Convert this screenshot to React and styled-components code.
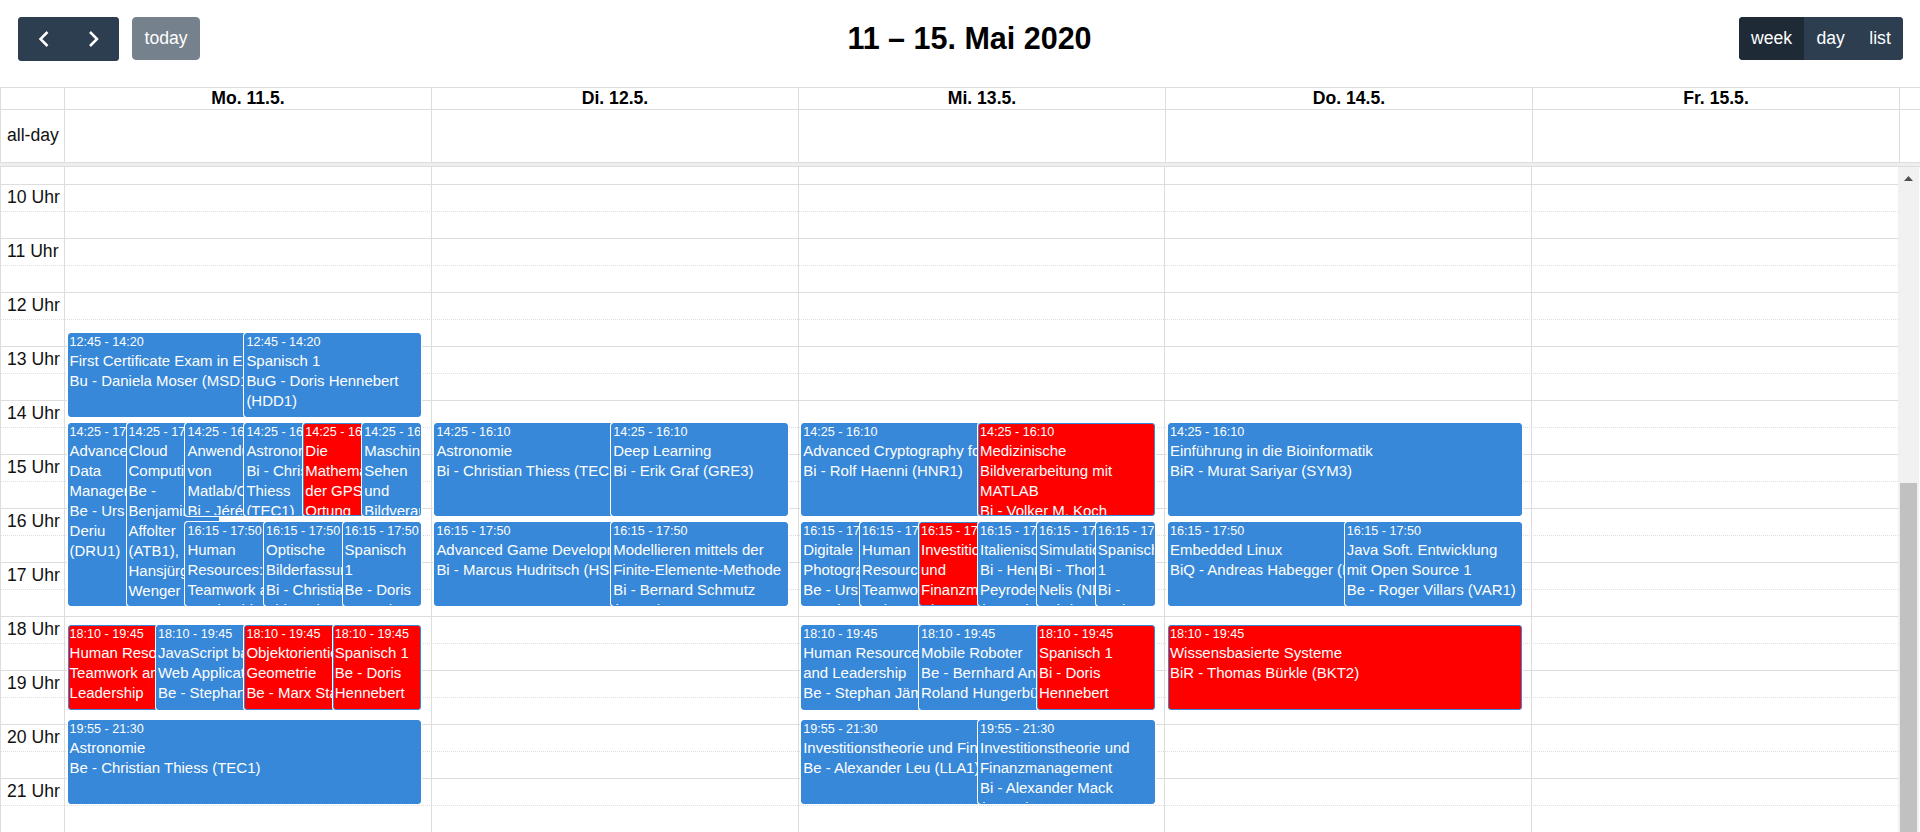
import React from 'react';
import styled, { createGlobalStyle } from 'styled-components';

const HOUR = 54;
const FIRST_LINE = 17; // 10 Uhr line, measured from the top of the scroller

const toY = (time) => {
    const [h, m] = time.split(':').map(Number);
    return FIRST_LINE + (h - 10 + m / 60) * HOUR;
};

const ev = (start, end, l, r, lines, red) => ({ start, end, l, r, lines, red });

const days = [
    [
        ev('12:45', '14:20', 0, 1, ['First Certificate Exam in English', 'Bu - Daniela Moser (MSD1)']),
        ev('12:45', '14:20', 1 / 2, 1, ['Spanisch 1', 'BuG - Doris Hennebert', '(HDD1)']),
        ev('14:25', '17:50', 0, 1 / 3, ['Advanced', 'Data', 'Management', 'Be - Urs', 'Deriu', '(DRU1)']),
        ev('14:25', '17:50', 1 / 6, 0.427, ['Cloud', 'Computing', 'Be -', 'Benjamin', 'Affolter', '(ATB1),', 'Hansjürg', 'Wenger']),
        ev('14:25', '16:10', 2 / 6, 4 / 6, ['Anwendung', 'von', 'Matlab/Octave', 'Bi - Jérémie']),
        ev('14:25', '16:10', 3 / 6, 5 / 6, ['Astronomie', 'Bi - Christian', 'Thiess', '(TEC1)']),
        ev('14:25', '16:10', 4 / 6, 0.92, ['Die', 'Mathematik', 'der GPS', 'Ortung'], true),
        ev('14:25', '16:10', 5 / 6, 1, ['Maschinelles', 'Sehen', 'und', 'Bildverarbeitung']),
        ev('16:15', '17:50', 2 / 6, 0.65, ['Human', 'Resources:', 'Teamwork and', 'Leadership']),
        ev('16:15', '17:50', 5 / 9, 0.87, ['Optische', 'Bilderfassung', 'Bi - Christian', 'Thiess (TEC1)']),
        ev('16:15', '17:50', 7 / 9, 1, ['Spanisch', '1', 'Be - Doris', 'Hennebert']),
        ev('18:10', '19:45', 0, 1 / 2, ['Human Resources:', 'Teamwork and', 'Leadership'], true),
        ev('18:10', '19:45', 1 / 4, 3 / 4, ['JavaScript based', 'Web Applications', 'Be - Stephan Fischli']),
        ev('18:10', '19:45', 1 / 2, 1, ['Objektorientierte', 'Geometrie', 'Be - Marx Stampfli'], true),
        ev('18:10', '19:45', 3 / 4, 1, ['Spanisch 1', 'Be - Doris', 'Hennebert'], true),
        ev('19:55', '21:30', 0, 1, ['Astronomie', 'Be - Christian Thiess (TEC1)']),
    ],
    [
        ev('14:25', '16:10', 0, 1, ['Astronomie', 'Bi - Christian Thiess (TEC1)']),
        ev('14:25', '16:10', 1 / 2, 1, ['Deep Learning', 'Bi - Erik Graf (GRE3)']),
        ev('16:15', '17:50', 0, 1, ['Advanced Game Development', 'Bi - Marcus Hudritsch (HSM1)']),
        ev('16:15', '17:50', 1 / 2, 1, ['Modellieren mittels der', 'Finite-Elemente-Methode', 'Bi - Bernard Schmutz', '(SNB1)']),
    ],
    [
        ev('14:25', '16:10', 0, 1, ['Advanced Cryptography for', 'Bi - Rolf Haenni (HNR1)']),
        ev('14:25', '16:10', 1 / 2, 1, ['Medizinische', 'Bildverarbeitung mit', 'MATLAB', 'Bi - Volker M. Koch'], true),
        ev('16:15', '17:50', 0, 2 / 6, ['Digitale', 'Photografie', 'Be - Urs', 'Künzler']),
        ev('16:15', '17:50', 1 / 6, 3 / 6, ['Human', 'Resources:', 'Teamwork', 'and']),
        ev('16:15', '17:50', 2 / 6, 4 / 6, ['Investitionstheorie', 'und', 'Finanzmanagement', 'Bi -'], true),
        ev('16:15', '17:50', 3 / 6, 5 / 6, ['Italienisch', 'Bi - Henri', 'Peyrodes', '(PGH1)']),
        ev('16:15', '17:50', 4 / 6, 1, ['Simulation', 'Bi - Thomas', 'Nelis (NLT1)', 'Stéphane']),
        ev('16:15', '17:50', 5 / 6, 1, ['Spanisch', '1', 'Bi -', 'Doris']),
        ev('18:10', '19:45', 0, 2 / 3, ['Human Resources', 'and Leadership', 'Be - Stephan Jämthagen']),
        ev('18:10', '19:45', 1 / 3, 1, ['Mobile Roboter', 'Be - Bernhard Anrig', 'Roland Hungerbühler']),
        ev('18:10', '19:45', 2 / 3, 1, ['Spanisch 1', 'Bi - Doris', 'Hennebert'], true),
        ev('19:55', '21:30', 0, 1, ['Investitionstheorie und Finanzmanagement', 'Be - Alexander Leu (LLA1)']),
        ev('19:55', '21:30', 1 / 2, 1, ['Investitionstheorie und', 'Finanzmanagement', 'Bi - Alexander Mack', '(MAA3)']),
    ],
    [
        ev('14:25', '16:10', 0, 1, ['Einführung in die Bioinformatik', 'BiR - Murat Sariyar (SYM3)']),
        ev('16:15', '17:50', 0, 1, ['Embedded Linux', 'BiQ - Andreas Habegger (HBA1)']),
        ev('16:15', '17:50', 1 / 2, 1, ['Java Soft. Entwicklung', 'mit Open Source 1', 'Be - Roger Villars (VAR1)']),
        ev('18:10', '19:45', 0, 1, ['Wissensbasierte Systeme', 'BiR - Thomas Bürkle (BKT2)'], true),
    ],
    [],
];

const headers = ['Mo. 11.5.', 'Di. 12.5.', 'Mi. 13.5.', 'Do. 14.5.', 'Fr. 15.5.'];
const hours = [10, 11, 12, 13, 14, 15, 16, 17, 18, 19, 20, 21];

const GlobalStyle = createGlobalStyle`
    html, body {
        margin: 0;
        height: 100%;
        overflow: hidden;
        background: #fff;
    }
    body {
        font-family: "Liberation Sans", Arial, sans-serif;
        font-size: 17.6px;
        line-height: 1.5;
        color: #111;
    }
    * {
        box-sizing: border-box;
    }
`;

const Calendar = styled.div`
    width: 1920px;
    height: 832px;
    overflow: hidden;
`;

const Toolbar = styled.div`
    height: 87px;
    padding: 17px 17px 0 18px;
    display: flex;
    justify-content: space-between;
    align-items: flex-start;
`;

const Group = styled.div`
    display: flex;
    gap: 13px;
`;

const ButtonGroup = styled.div`
    display: flex;
    border-radius: 4px;
    overflow: hidden;
`;

const Button = styled.button`
    height: ${(p) => (p.$tall ? '44px' : '43px')};
    padding: 0 11.2px;
    font: inherit;
    color: #fff;
    border: 1px solid ${(p) => (p.$active ? '#1e2b37' : '#2c3e50')};
    background: ${(p) => (p.$active ? '#1e2b37' : '#2c3e50')};
    display: flex;
    align-items: center;
    justify-content: center;
`;

const ArrowButton = styled(Button)`
    width: 50.5px;
    padding: 0;
`;

const TodayButton = styled(Button)`
    padding: 0 11.5px;
    opacity: 0.65;
    border-radius: 4px;
`;

const Title = styled.h2`
    margin: 0;
    font-size: 30.5px;
    line-height: 43px;
    font-weight: 700;
    color: #000;
`;

const HeadRow = styled.div`
    display: grid;
    grid-template-columns: 64px repeat(5, 367px) 1fr;
    height: ${(p) => p.$height}px;
    border-top: 1px solid #ddd;
`;

const HeadCell = styled.div`
    border-left: 1px solid #ddd;
    font-weight: ${(p) => (p.$bold ? 700 : 400)};
    color: ${(p) => (p.$bold ? '#000' : 'inherit')};
    text-align: ${(p) => (p.$bold ? 'center' : 'left')};
    line-height: 21px;
`;

const AxisLabel = styled(HeadCell)`
    padding: 13px 0 0 6px;
    white-space: nowrap;
    line-height: 24px;
`;

const Divider = styled.div`
    height: 5px;
    background: #eee;
    border-top: 1px solid #ddd;
    border-bottom: 1px solid #ddd;
`;

const Scroller = styled.div`
    display: flex;
    height: 665px;
    overflow: hidden;
`;

const Grid = styled.div`
    position: relative;
    width: 1898px;
    flex: none;
    border-left: 1px solid #ddd;
`;

const SlotRow = styled.div`
    height: ${(p) => p.$height || HOUR / 2}px;
    border-bottom: 1px ${(p) => (p.$dotted ? 'dotted' : 'solid')} #ddd;
    padding-left: 6px;
    line-height: 24px;
    white-space: nowrap;
`;

const Columns = styled.div`
    position: absolute;
    top: 0;
    bottom: 0;
    left: 63px;
    right: 0;
    display: grid;
    grid-template-columns: repeat(5, 1fr);
`;

const DayColumn = styled.div`
    position: relative;
    border-left: 1px solid #ddd;
    padding: 0 9.6px 0 2.6px;
`;

const EventLayer = styled.div`
    position: relative;
    height: 100%;
`;

const Event = styled.div.attrs((p) => ({
    style: {
        top: p.$top,
        height: p.$height,
        left: `${p.$l * 100}%`,
        right: `${(1 - p.$r) * 100}%`,
    },
}))`
    position: absolute;
    overflow: hidden;
    padding: 0 1px;
    color: #fff;
    background: ${(p) => (p.$red ? '#f00' : '#3788d8')};
    border: 1px solid #3788d8;
    border-radius: 3px;
    box-shadow: 0 0 0 1px #fff;
    font-size: 14.96px;
    line-height: 20px;
`;

const EventTime = styled.div`
    font-size: 12.6px;
    line-height: 17px;
    white-space: nowrap;
`;

const EventLine = styled.div`
    white-space: nowrap;
`;

const Scrollbar = styled.div`
    width: 21px;
    padding: 0 2px;
    background: #f1f1f1;
    display: flex;
    flex-direction: column;
`;

const ScrollArrow = styled.div`
    height: 316px;
    padding: 9px 4px 0;
`;

const ScrollThumb = styled.div`
    flex: 1;
    width: 17px;
    background: #c1c1c1;
`;

const Chevron = ({ d }) => (
    <svg width="16" height="20" viewBox="0 0 16 20" fill="none" stroke="#fff" strokeWidth="2.5">
        <path d={d} />
    </svg>
);

const CalEvent = ({ e }) => {
    const top = Math.ceil(toY(e.start));
    const bottom = Math.ceil(toY(e.end)) - 1;
    return (
        <Event $top={top} $height={bottom - top} $l={e.l} $r={e.r} $red={e.red}>
            <EventTime>{e.start} - {e.end}</EventTime>
            {e.lines.map((line, i) => (
                <EventLine key={i}>{line}</EventLine>
            ))}
        </Event>
    );
};

const App = () => {
    return (
        <Calendar>
            <GlobalStyle />
            <Toolbar>
                <Group>
                    <ButtonGroup>
                        <ArrowButton $tall>
                            <Chevron d="M12.5 3 L5.5 10 L12.5 17" />
                        </ArrowButton>
                        <ArrowButton $tall>
                            <Chevron d="M4 3 L11 10 L4 17" />
                        </ArrowButton>
                    </ButtonGroup>
                    <TodayButton>today</TodayButton>
                </Group>
                <Title>11 – 15. Mai 2020</Title>
                <ButtonGroup>
                    <Button $active>week</Button>
                    <Button>day</Button>
                    <Button>list</Button>
                </ButtonGroup>
            </Toolbar>
            <HeadRow $height={22}>
                <HeadCell />
                {headers.map((h) => (
                    <HeadCell $bold key={h}>{h}</HeadCell>
                ))}
                <HeadCell />
            </HeadRow>
            <HeadRow $height={53}>
                <AxisLabel>all-day</AxisLabel>
                {headers.map((h) => (
                    <HeadCell key={h} />
                ))}
                <HeadCell />
            </HeadRow>
            <Divider />
            <Scroller>
                <Grid>
                    <SlotRow $height={FIRST_LINE + 1} />
                    {hours.map((h) => (
                        <React.Fragment key={h}>
                            <SlotRow $dotted>{h} Uhr</SlotRow>
                            <SlotRow />
                        </React.Fragment>
                    ))}
                    <Columns>
                        {days.map((events, i) => (
                            <DayColumn key={i}>
                                <EventLayer>
                                    {events.map((e, j) => (
                                        <CalEvent e={e} key={j} />
                                    ))}
                                </EventLayer>
                            </DayColumn>
                        ))}
                    </Columns>
                </Grid>
                <Scrollbar>
                    <ScrollArrow>
                        <svg width="9" height="5" viewBox="0 0 9 5" style={{ display: 'block' }}>
                            <path d="M4.5 0 L9 5 L0 5 Z" fill="#505050" />
                        </svg>
                    </ScrollArrow>
                    <ScrollThumb />
                </Scrollbar>
            </Scroller>
        </Calendar>
    );
};

export default App;
